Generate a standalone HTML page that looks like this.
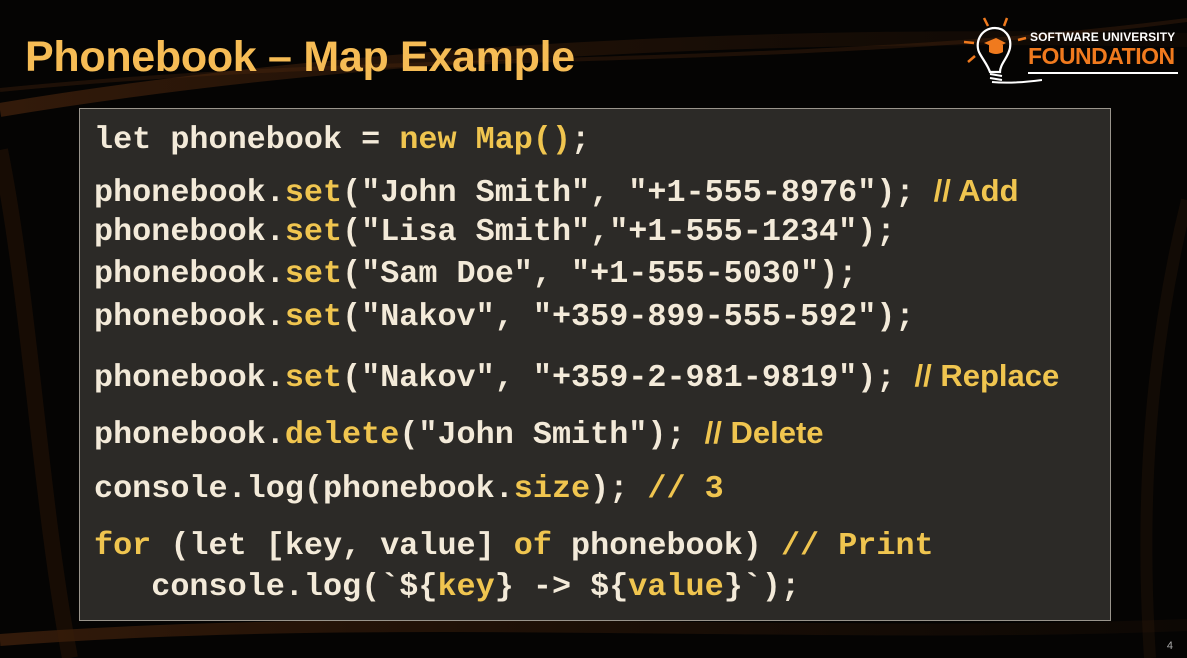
<!DOCTYPE html>
<html><head><meta charset="utf-8"><style>
body{margin:0;width:1187px;height:658px;overflow:hidden;background:#050403;position:relative;font-family:"Liberation Sans",sans-serif}
.bg{position:absolute;inset:0}
h1{position:absolute;left:25px;top:33px;margin:0;font-size:43px;font-weight:bold;color:#f6bc55;letter-spacing:-0.3px}
.box{position:absolute;left:79px;top:108px;width:1032px;height:513px;background:rgba(45,43,40,0.97);border:1.5px solid #9a958c;box-sizing:border-box}
.l{position:absolute;left:94px;font-family:"Liberation Mono",monospace;font-weight:bold;font-size:31.8px;color:#f3ead9;white-space:pre;line-height:1}
.y{color:#f0c54f}
.c{font-family:"Liberation Sans",sans-serif;color:#f0c54f;font-size:31px}
.pg{position:absolute;right:14px;bottom:6px;color:#aaa;font-size:11px}
</style></head><body>
<svg class="bg" width="1187" height="658">
<defs><linearGradient id="g" x1="0" x2="1"><stop offset="0" stop-color="#6a3512" stop-opacity=".45"/><stop offset="1" stop-color="#3a1e0a" stop-opacity=".15"/></linearGradient></defs>
<path d="M0 110 C300 60 700 30 1187 40" stroke="url(#g)" stroke-width="14" fill="none"/>
<path d="M0 90 C400 50 800 70 1187 20" stroke="#5a2e10" stroke-opacity=".3" stroke-width="4" fill="none"/>
<path d="M0 640 C400 610 800 640 1187 625" stroke="url(#g)" stroke-width="12" fill="none"/>
<path d="M0 150 C30 300 40 500 70 658" stroke="#3a1e0a" stroke-opacity=".35" stroke-width="16" fill="none"/>
<path d="M1187 200 C1150 350 1140 500 1150 658" stroke="#3a1e0a" stroke-opacity=".25" stroke-width="12" fill="none"/>
</svg>
<h1>Phonebook – Map Example</h1>
<svg style="position:absolute;left:962px;top:14px" width="80" height="72">
<g stroke="#f07a1e" stroke-width="2.5"><line x1="22" y1="4" x2="26" y2="12"/><line x1="45" y1="4" x2="42" y2="12"/><line x1="2" y1="28" x2="12" y2="29"/><line x1="56" y1="26" x2="64" y2="24"/><line x1="6" y1="48" x2="13" y2="42"/></g>
<path d="M33 14 C18 14 12 30 18 40 C22 47 26 52 28 58 L38 58 C38 50 46 44 48 34 C50 22 42 14 33 14Z" stroke="#fff" stroke-width="2.2" fill="none"/>
<path d="M22 29 L34 24 L44 29 L34 34Z" fill="#f07a1e"/><path d="M27 31 L27 38 Q34 42 41 38 L41 31" fill="#f07a1e"/>
<path d="M28 60 L40 62 M28 64 L40 66 M30 68 Q50 70 80 66" stroke="#fff" stroke-width="2" fill="none"/>
</svg>
<div style="position:absolute;left:1030px;top:30px;color:#fff;font-weight:bold;font-size:12px;letter-spacing:0.1px">SOFTWARE UNIVERSITY</div>
<div style="position:absolute;left:1028px;top:43px;color:#f07a1e;font-weight:bold;font-size:23px;letter-spacing:-0.5px">FOUNDATION</div>
<div style="position:absolute;left:1028px;top:72px;width:150px;height:2px;background:#fff"></div>
<div class="box"></div>
<div class="l" style="top:125px">let phonebook = <span class="y">new Map()</span>;</div>
<div class="l" style="top:175px">phonebook.<span class="y">set</span>("John Smith", "+1-555-8976"); <span class="c">// Add</span></div>
<div class="l" style="top:217px">phonebook.<span class="y">set</span>("Lisa Smith","+1-555-1234");</div>
<div class="l" style="top:259px">phonebook.<span class="y">set</span>("Sam Doe", "+1-555-5030");</div>
<div class="l" style="top:302px">phonebook.<span class="y">set</span>("Nakov", "+359-899-555-592");</div>
<div class="l" style="top:360px">phonebook.<span class="y">set</span>("Nakov", "+359-2-981-9819"); <span class="c">// Replace</span></div>
<div class="l" style="top:417px">phonebook.<span class="y">delete</span>("John Smith"); <span class="c">// Delete</span></div>
<div class="l" style="top:474px">console.log(phonebook.<span class="y">size</span>); <span class="y">// 3</span></div>
<div class="l" style="top:531px"><span class="y">for</span> (let [key, value] <span class="y">of</span> phonebook) <span class="y">// Print</span></div>
<div class="l" style="top:572px">   console.log(`${<span class="y">key</span>} -&gt; ${<span class="y">value</span>}`);</div>
<div class="pg">4</div>
</body></html>
